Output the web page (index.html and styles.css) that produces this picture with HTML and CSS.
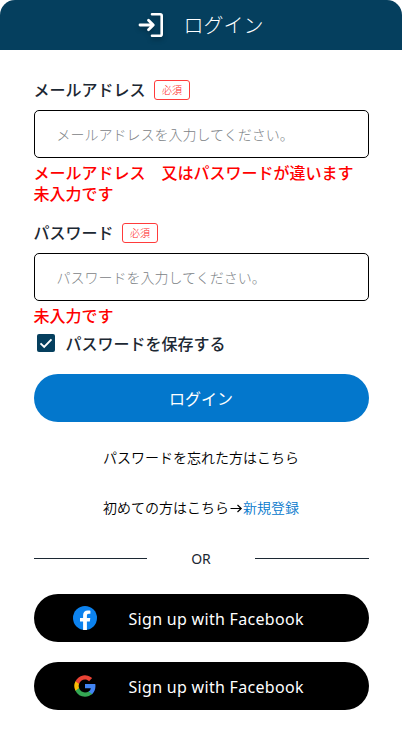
FILE: index.html
```
<!DOCTYPE html>
<html lang="ja">
<head>
    <meta charset="UTF-8">
    <meta name="viewport" content="width=device-width, initial-scale=1.0">
    <title>ログイン</title>
    <link rel="stylesheet" href="styles.css">
</head>
<body>
    <header class="header">
        <svg class="header-icon" width="26" height="30" viewBox="0 0 26 30" fill="none" stroke="#fff" stroke-width="2.6" stroke-linecap="round" stroke-linejoin="round">
            <path d="M14 4.3h8.2q1.5 0 1.5 1.5v18.4q0 1.5-1.5 1.5H14"/>
            <path d="M2 15h13M10.5 10.2l4.8 4.8-4.8 4.8" stroke-width="2.8"/>
        </svg>
        <h1>ログイン</h1>
    </header>
    <main class="main">
        <form class="login-form">
            <div class="field">
                <div class="field-head">
                    <label for="email">メールアドレス</label>
                    <span class="required">必須</span>
                </div>
                <input class="text-input" type="text" id="email" placeholder="メールアドレスを入力してください。">
                <div class="errors">
                    <p>メールアドレス　又はパスワードが違います</p>
                    <p>未入力です</p>
                </div>
            </div>
            <div class="field">
                <div class="field-head">
                    <label for="password">パスワード</label>
                    <span class="required">必須</span>
                </div>
                <input class="text-input" type="password" id="password" placeholder="パスワードを入力してください。">
                <div class="errors">
                    <p>未入力です</p>
                </div>
            </div>
            <div class="save">
                <svg width="18" height="18" viewBox="0 0 18 18">
                    <rect width="18" height="18" rx="2" fill="#053f5e"/>
                    <path d="M3.5 9.3l3.7 3.7 7.3-7.6" fill="none" stroke="#fff" stroke-width="1.9"/>
                </svg>
                <span>パスワードを保存する</span>
            </div>
            <button type="button" class="btn btn-login">ログイン</button>
        </form>
        <a href="#" class="link">パスワードを忘れた方はこちら</a>
        <p class="link">初めての方はこちら<svg class="arrow" width="14" height="14" viewBox="0 0 14 14" fill="none" stroke="#000" stroke-width="1.2"><path d="M1.5 7.5h10.5M8.5 4l3.7 3.5L8.5 11"/></svg><a href="#" class="register">新規登録</a></p>
        <div class="divider"><span>OR</span></div>
        <button type="button" class="btn btn-social">
            <svg width="24" height="24" viewBox="0 0 24 24">
                <circle cx="12" cy="12" r="12" fill="#0c82ee"/>
                <path d="M10.1 24v-8.6H7v-3.5h3.1V9.3c0-3.1 1.8-4.7 4.6-4.7 1.3 0 2.7.2 2.7.2v3h-1.5c-1.5 0-2 .9-2 1.9v2.2h3.4l-.5 3.5h-2.9V24z" fill="#fff"/>
            </svg>
            <span>Sign up with Facebook</span>
        </button>
        <button type="button" class="btn btn-social">
            <svg width="24" height="24" viewBox="-1.5 -1.5 27 27">
                <path fill="#4285f4" d="M23.76 12.27c0-.85-.08-1.67-.22-2.45H12v4.64h6.6a5.64 5.64 0 0 1-2.45 3.7v3.01h3.88c2.27-2.09 3.73-5.17 3.73-8.9z"/>
                <path fill="#34a853" d="M12 24c3.24 0 5.96-1.07 7.95-2.91l-3.88-3.01c-1.08.72-2.45 1.15-4.07 1.15-3.13 0-5.78-2.11-6.73-4.95H1.26v3.11A12 12 0 0 0 12 24z"/>
                <path fill="#fbbc05" d="M5.27 14.28A7.2 7.2 0 0 1 4.89 12c0-.79.14-1.56.38-2.28V6.61H1.26a12 12 0 0 0 0 10.78z"/>
                <path fill="#ea4335" d="M12 4.77c1.76 0 3.34.61 4.59 1.8l3.44-3.44A11.97 11.97 0 0 0 1.26 6.61l4.01 3.11C6.22 6.88 8.87 4.77 12 4.77z"/>
            </svg>
            <span>Sign up with Facebook</span>
        </button>
    </main>
</body>
</html>
```
FILE: styles.css
```
* {
    margin: 0;
    padding: 0;
    box-sizing: border-box;
}
body {
    font-family: 'Noto Sans CJK JP', sans-serif;
    background: #ffffff;
    color: #1c2833;
    font-size: 16px;
    overflow-x: hidden;
}
button, input { font-family: inherit; }

.header { display: flex; justify-content: center; align-items: center; gap: 20px; height: 50px; padding-right: 1px; background: #053f5e; border-radius: 15px 15px 0 0; }
.header-icon { filter: drop-shadow(0 3px 2px rgba(0, 0, 0, 0.25)); }
.header h1 { color: #fff; font-size: 20px; font-weight: 300; line-height: 30px; }

.main { padding: 29px 33.5px 19px; }
.field { margin-bottom: 17px; }
.field-head { display: flex; align-items: center; gap: 8.5px; height: 22px; margin-bottom: 9px; }
.field-head label { font-weight: 500; line-height: 20px; padding-bottom: 2px; }
.required { width: 36px; height: 20px; margin-bottom: 1px; border: 1px solid #ff3b3b; border-radius: 3px; color: #ff1a1a; font-size: 10px; font-weight: 300; line-height: 18px; text-align: center; }
.text-input { display: block; width: 100%; height: 48px; padding: 0 22px 1px; border: 1px solid #000; border-radius: 5px; background: #fff; font-size: 14px; outline: none; }
.text-input::placeholder { color: #7c8286; font-weight: 300; }
.errors { margin-top: 4px; margin-bottom: 18px; color: #ff0000; font-weight: 500; line-height: 21px; }
.field + .field { margin-bottom: 5px; }
.field + .field .errors { margin-bottom: 0; }

.save { display: flex; align-items: center; gap: 11px; height: 24px; padding-left: 3px; font-weight: 500; line-height: 24px; }
.btn { display: flex; align-items: center; width: 100%; height: 48px; border: none; border-radius: 24px; color: #fff; font-size: 16px; cursor: pointer; }
.btn-login { justify-content: center; margin-top: 19px; background: #0377cc; font-weight: 400; }

.link { display: block; height: 20px; margin-top: 25px; color: #000; font-size: 14px; font-weight: 350; line-height: 20px; text-align: center; text-decoration: none; }
.link + .link { margin-top: 30px; }
.arrow { vertical-align: -2px; }
.register { color: #0377cc; text-decoration: none; }

.divider { display: flex; align-items: center; height: 20px; margin: 31px 0 26px; font-size: 14px; line-height: 20px; }
.divider::before, .divider::after { content: ''; width: 113.5px; height: 1px; background: #1c2833; }
.divider span { flex: 1; padding-top: 1px; text-align: center; color: #1c2833; font-family: 'Noto Sans', sans-serif; font-weight: 400; }

.btn-social { gap: 31.5px; padding-left: 39.5px; background: #000; font-family: 'Noto Sans', sans-serif; font-weight: 400; letter-spacing: 0.3px; }
.btn-social span { padding-top: 1px; }
.btn-social + .btn-social { margin-top: 20px; }
```
